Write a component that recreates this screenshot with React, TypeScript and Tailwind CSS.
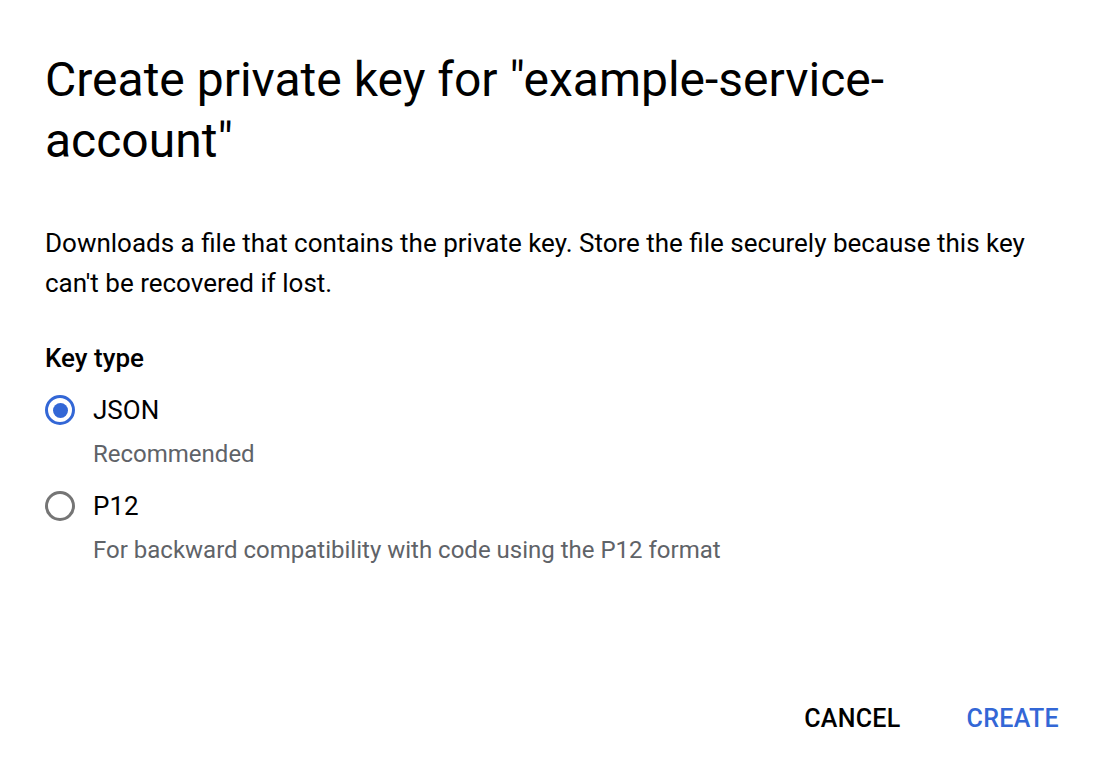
import { useState } from 'react';

function Radio({ checked }: { checked: boolean }) {
  return (
    <span
      className={
        'flex h-[30px] w-[30px] shrink-0 items-center justify-center rounded-full border-[3px] ' +
        (checked ? 'border-[#3367d6]' : 'border-[#757575]')
      }
    >
      {checked && <span className="h-[15px] w-[15px] rounded-full bg-[#3367d6]" />}
    </span>
  );
}

export default function App() {
  const [type, setType] = useState<'json' | 'p12'>('json');
  const options = [
    { id: 'json' as const, label: 'JSON', hint: 'Recommended' },
    { id: 'p12' as const, label: 'P12', hint: 'For backward compatibility with code using the P12 format' },
  ];

  return (
    <div className="flex h-[784px] w-[1114px] flex-col bg-white font-['Roboto',sans-serif] text-black">
      <div className="px-[45px] pt-[49px]">
        <h1 className="text-[48px] leading-[61px] font-normal">
          Create private key for "example-service-account"
        </h1>
        <p className="mt-[52px] text-[26px] leading-[40px]">
          Downloads a file that contains the private key. Store the file securely because this key can't be recovered if lost.
        </p>
        <div className="mt-[40px] text-[26px] leading-[30px] font-medium">Key type</div>
        <div className="mt-[12px] flex flex-col gap-[8px]">
          {options.map(o => (
            <label key={o.id} className="flex cursor-pointer flex-col" onClick={() => setType(o.id)}>
              <span className="flex h-[50px] items-center gap-[18px]">
                <Radio checked={type === o.id} />
                <span className="text-[26px]">{o.label}</span>
              </span>
              <span className="pl-[48px] text-[24px] leading-[38px] text-[#5f6368]">{o.hint}</span>
            </label>
          ))}
        </div>
      </div>
      <div className="mt-auto flex justify-end gap-[26px] px-[35px] pb-[37px]">
        <button type="button" className="px-[20px] py-[10px] text-[25px] font-medium tracking-[0.3px] text-black">
          CANCEL
        </button>
        <button type="button" className="px-[20px] py-[10px] text-[25px] font-medium tracking-[0.3px] text-[#3367d6]">
          CREATE
        </button>
      </div>
    </div>
  );
}
